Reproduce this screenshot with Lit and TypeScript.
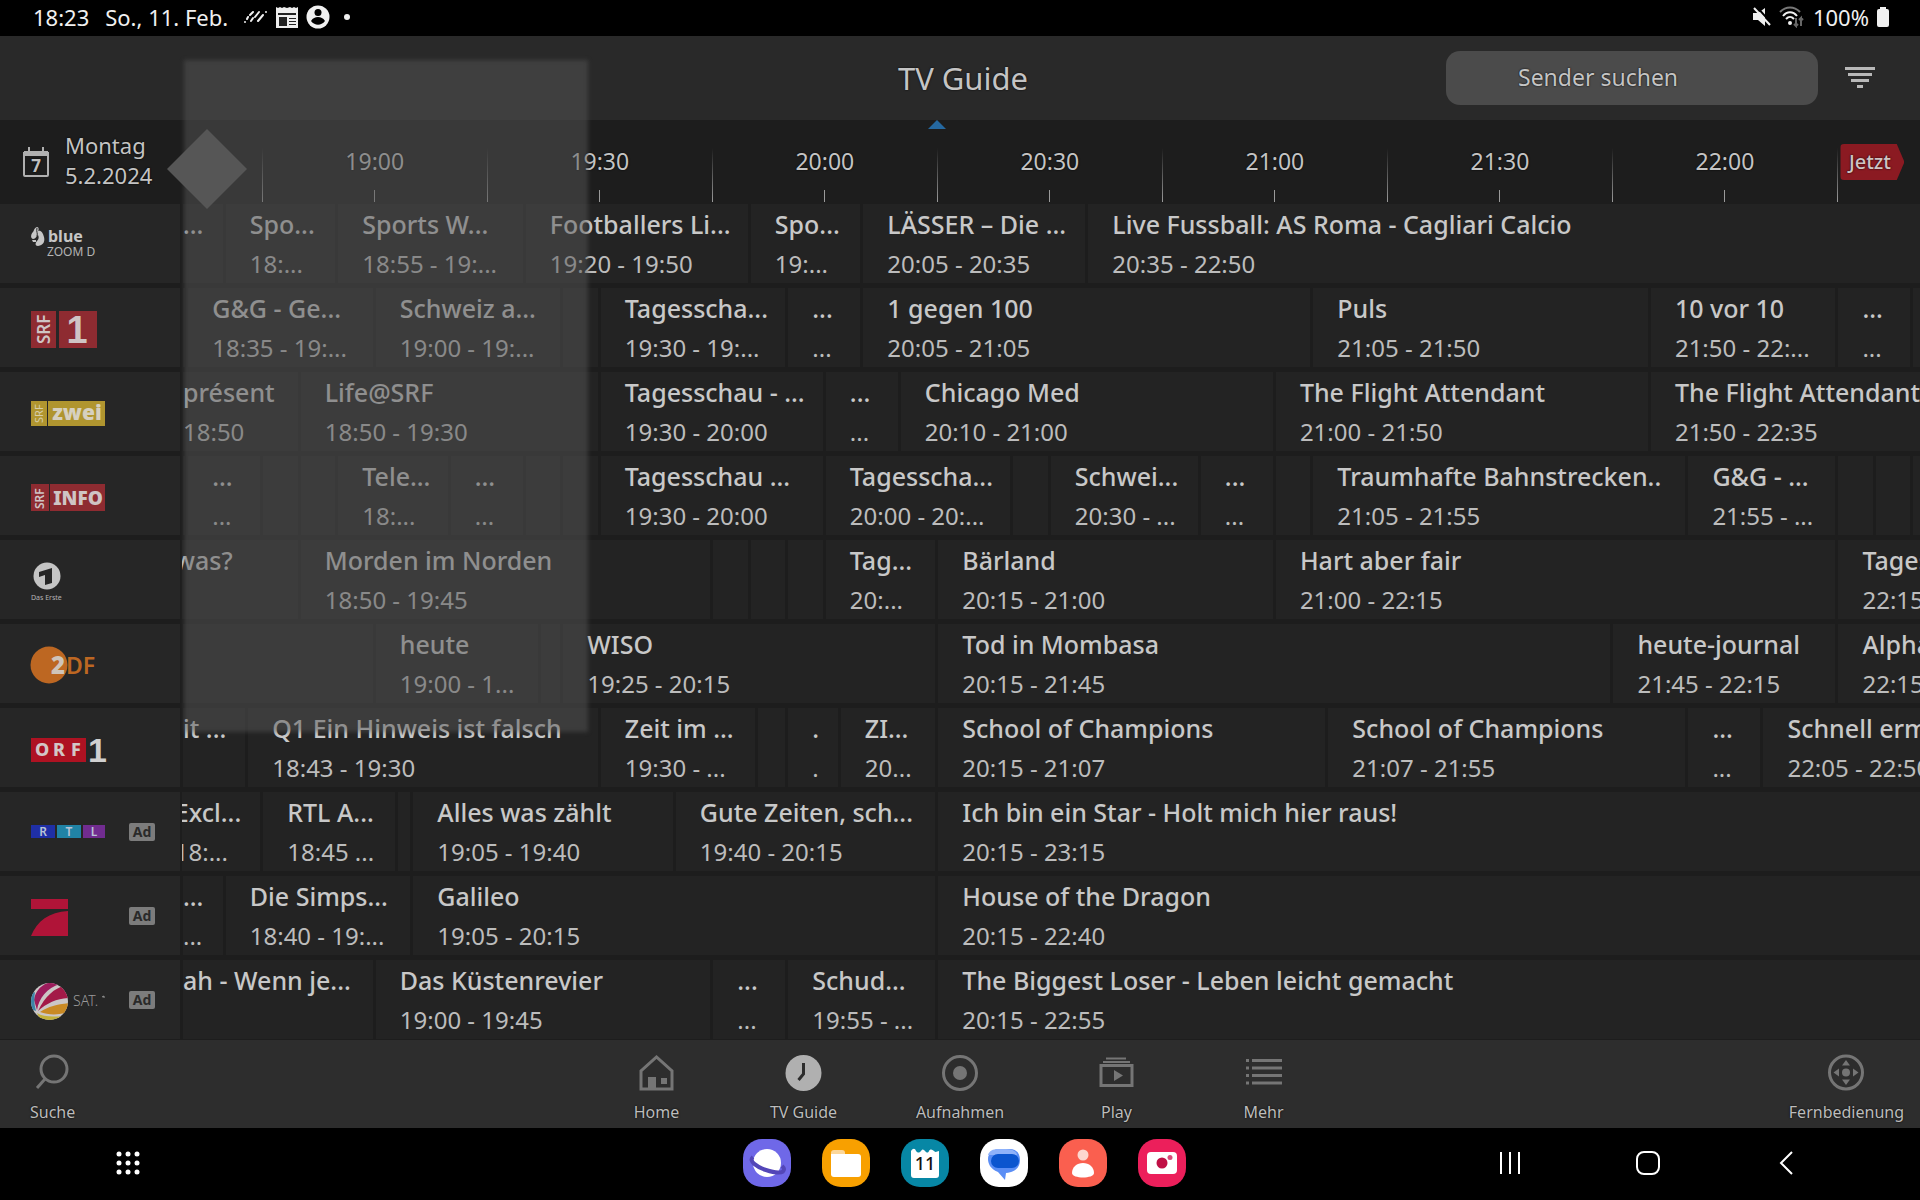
import { LitElement, html, svg, css, nothing } from "lit";
import type { SVGTemplateResult, TemplateResult } from "lit";
import { customElement, property } from "lit/decorators.js";

/** Minutes since midnight at the left edge of the timeline, and how many minutes it shows. */
const WINDOW_START = 18 * 60 + 34.3;
const WINDOW_SPAN = 231.7;

interface Show {
  end: number;
  title?: string;
  time?: string;
}

interface Channel {
  name: string;
  logo: SVGTemplateResult;
  ad?: boolean;
  start?: number;
  shows: Show[];
}

const at = (clock: string): number => {
  const [h, m] = clock.split(":").map(Number);
  return h * 60 + m;
};

const show = (end: string, title?: string, time?: string): Show => ({ end: at(end), title, time });

const blueLogo = svg`
  <path fill="#c6c6c6" d="M6 23c2 0 2 3 1 4 3-1 5 2 6 6s0 8-6 9c-3 0-3-3-1-5s2-4 1-6c-2 1-2 4-5 4-3-1-2-5 0-7 1-1 1-4 4-5z"/>
  <path fill="#c6c6c6" d="M1 36h4v2H2z"/>
  <path fill="none" stroke="#262626" stroke-width="1" d="M6 24c-1 4 1 5 0 8"/>
  <text x="17" y="38" font-size="16" font-weight="700" fill="#c6c6c6">blue</text>
  <text x="16" y="52" font-size="12" fill="#b4b4b4">ZOOM D</text>`;

const srf1Logo = svg`
  <rect x="0" y="23" width="25" height="37" fill="#8e2b31"/>
  <rect x="28" y="23" width="38" height="37" fill="#8e2b31"/>
  <text transform="translate(19 56) rotate(-90)" font-size="17" font-weight="600" fill="#cfc4c4">SRF</text>
  <text x="46" y="55" text-anchor="middle" font-family="Liberation Sans" font-size="38" font-weight="700" fill="#cfc4c4">1</text>`;

const srfZweiLogo = svg`
  <rect x="0" y="29" width="16" height="25" fill="#b0952f"/>
  <rect x="17" y="29" width="57" height="25" fill="#b0952f"/>
  <text transform="translate(12 51) rotate(-90)" font-size="11" fill="#d6cdaa">SRF</text>
  <text x="46" y="48" text-anchor="middle" font-size="21" font-weight="900" fill="#d6d0c0">zwei</text>`;

const srfInfoLogo = svg`
  <rect x="0" y="28" width="18" height="27" fill="#8e2b31"/>
  <rect x="19" y="28" width="55" height="27" fill="#8e2b31"/>
  <text transform="translate(13 53) rotate(-90)" font-size="12" font-weight="600" fill="#cfc4c4">SRF</text>
  <text x="47" y="49" text-anchor="middle" font-size="19" font-weight="900" fill="#cfc4c4">INFO</text>`;

const ersteLogo = svg`
  <circle cx="16" cy="36" r="13.500" fill="#c4c4c4"/>
  <path fill="#262626" d="M8 32l13-4v15l-7 2V35l-6 2z"/>
  <text x="0" y="60" font-size="7" fill="#b4b4b4">Das Erste</text>`;

const zdfLogo = svg`
  <circle cx="18" cy="41" r="18.500" fill="#bd6722"/>
  <text x="35" y="50" font-size="23" font-weight="600" fill="#bd6722">DF</text>
  <text x="20" y="50" font-size="24" font-weight="900" fill="#cfc4ba">2</text>`;

const orfLogo = svg`
  <rect x="0" y="30" width="55" height="24" fill="#ae1222"/>
  <text x="4 22 40" y="48" font-size="18" font-weight="800" fill="#d2c6c6">ORF</text>
  <text x="57" y="54" font-family="Liberation Sans" font-size="34" font-weight="700" fill="#d0d0d0">1</text>`;

const rtlLogo = svg`
  <rect x="0" y="33" width="24" height="13" fill="#1f2fa6"/>
  <rect x="26" y="33" width="24" height="13" fill="#2083a6"/>
  <rect x="52" y="33" width="22" height="13" fill="#712c90"/>
  <g font-size="12" font-weight="600" fill="#b9c3d6" text-anchor="middle">
    <text x="12" y="44">R</text><text x="38" y="44">T</text><text x="63" y="44">L</text>
  </g>`;

const pro7Logo = svg`
  <path fill="#b01438" d="M0 23h37v10H0zM37 35v25H0c6-15 18-24 37-25z"/>`;

const sat1Logo = svg`
  <defs><clipPath id="ball"><circle cx="18.500" cy="41.500" r="18.500"/></clipPath></defs>
  <g clip-path="url(#ball)">
    <rect x="0" y="23" width="37" height="37" fill="#cbc6c6"/>
    <path fill="#9c1c5c" d="M3 40C4 32 10 24 20 22l9 2C16 28 8 38 6 50z"/>
    <path fill="#a31a48" d="M7 51C14 36 24 28 33 26l6 12C27 38 16 43 7 51z"/>
    <path fill="#c98a24" d="M9 52c9-6 18-8 30-9l-5 10c-8 2-17 2-25-1z"/>
    <path fill="#c2b13a" d="M6 53c6 4 16 4 26 3l-10 6H10z"/>
    <path fill="#3c84a8" d="M0 34l4-2c-1 6-1 12 1 19l-5-2z"/>
  </g>
  <text x="42" y="46" font-size="14" font-weight="300" fill="#9a9a9a">SAT.</text>
  <path d="M71 37l2-1v2" stroke="#9a9a9a" fill="none"/>`;

const CHANNELS: Channel[] = [
  {
    name: "blue Zoom D",
    logo: blueLogo,
    shows: [
      show("18:40", "...", " "),
      show("18:55", "Spo...", "18:..."),
      show("19:20", "Sports W...", "18:55 - 19:..."),
      show("19:50", "Footballers Li...", "19:20 - 19:50"),
      show("20:05", "Spo...", "19:..."),
      show("20:35", "LÄSSER – Die ...", "20:05 - 20:35"),
      show("22:50", "Live Fussball: AS Roma - Cagliari Calcio", "20:35 - 22:50"),
    ],
  },
  {
    name: "SRF 1",
    logo: srf1Logo,
    shows: [
      show("18:35"),
      show("19:00", "G&G - Ge...", "18:35 - 19:..."),
      show("19:25", "Schweiz a...", "19:00 - 19:..."),
      show("19:30"),
      show("19:55", "Tagesscha...", "19:30 - 19:..."),
      show("20:05", "...", "..."),
      show("21:05", "1 gegen 100", "20:05 - 21:05"),
      show("21:50", "Puls", "21:05 - 21:50"),
      show("22:15", "10 vor 10", "21:50 - 22:..."),
      show("22:25", "...", "..."),
      show("23:00"),
    ],
  },
  {
    name: "SRF zwei",
    logo: srfZweiLogo,
    shows: [
      show("18:50", "présent", "18:50"),
      show("19:30", "Life@SRF", "18:50 - 19:30"),
      show("20:00", "Tagesschau - ...", "19:30 - 20:00"),
      show("20:10", "...", "..."),
      show("21:00", "Chicago Med", "20:10 - 21:00"),
      show("21:50", "The Flight Attendant", "21:00 - 21:50"),
      show("22:35", "The Flight Attendant", "21:50 - 22:35"),
    ],
  },
  {
    name: "SRF info",
    logo: srfInfoLogo,
    shows: [
      show("18:35"),
      show("18:45", "...", "..."),
      show("18:50"),
      show("18:55"),
      show("19:10", "Tele...", "18:..."),
      show("19:20", "...", "..."),
      show("19:25"),
      show("19:30"),
      show("20:00", "Tagesschau ...", "19:30 - 20:00"),
      show("20:25", "Tagesscha...", "20:00 - 20:..."),
      show("20:30"),
      show("20:50", "Schwei...", "20:30 - ..."),
      show("21:00", "...", "..."),
      show("21:05"),
      show("21:55", "Traumhafte Bahnstrecken..", "21:05 - 21:55"),
      show("22:15", "G&G - ...", "21:55 - ..."),
      show("22:20"),
      show("22:25"),
      show("23:00"),
    ],
  },
  {
    name: "Das Erste",
    logo: ersteLogo,
    start: at("18:30"),
    shows: [
      show("18:50", "was?", " "),
      show("19:45", "Morden im Norden", "18:50 - 19:45"),
      show("19:50"),
      show("19:55"),
      show("20:00"),
      show("20:15", "Tag...", "20:..."),
      show("21:00", "Bärland", "20:15 - 21:00"),
      show("22:15", "Hart aber fair", "21:00 - 22:15"),
      show("22:50", "Tagesthemen", "22:15 - 22:50"),
    ],
  },
  {
    name: "ZDF",
    logo: zdfLogo,
    shows: [
      show("19:00"),
      show("19:22", "heute", "19:00 - 1..."),
      show("19:25"),
      show("20:15", "WISO", "19:25 - 20:15"),
      show("21:45", "Tod in Mombasa", "20:15 - 21:45"),
      show("22:15", "heute-journal", "21:45 - 22:15"),
      show("23:45", "Alpha", "22:15 - 23:45"),
    ],
  },
  {
    name: "ORF 1",
    logo: orfLogo,
    shows: [
      show("18:43", "it ...", " "),
      show("19:30", "Q1 Ein Hinweis ist falsch", "18:43 - 19:30"),
      show("19:51", "Zeit im ...", "19:30 - ..."),
      show("19:55"),
      show("20:02", ".", "."),
      show("20:15", "ZI...", "20..."),
      show("21:07", "School of Champions", "20:15 - 21:07"),
      show("21:55", "School of Champions", "21:07 - 21:55"),
      show("22:05", "...", "..."),
      show("22:50", "Schnell ermittelt", "22:05 - 22:50"),
    ],
  },
  {
    name: "RTL",
    logo: rtlLogo,
    ad: true,
    start: at("18:30"),
    shows: [
      show("18:45", "Excl...", "18:..."),
      show("19:03", "RTL A...", "18:45 ..."),
      show("19:05"),
      show("19:40", "Alles was zählt", "19:05 - 19:40"),
      show("20:15", "Gute Zeiten, sch...", "19:40 - 20:15"),
      show("23:15", "Ich bin ein Star - Holt mich hier raus!", "20:15 - 23:15"),
    ],
  },
  {
    name: "ProSieben",
    logo: pro7Logo,
    ad: true,
    shows: [
      show("18:40", "...", "..."),
      show("19:05", "Die Simps...", "18:40 - 19:..."),
      show("20:15", "Galileo", "19:05 - 20:15"),
      show("22:40", "House of the Dragon", "20:15 - 22:40"),
    ],
  },
  {
    name: "SAT.1",
    logo: sat1Logo,
    ad: true,
    shows: [
      show("19:00", "ah - Wenn je...", " "),
      show("19:45", "Das Küstenrevier", "19:00 - 19:45"),
      show("19:55", "...", "..."),
      show("20:15", "Schud...", "19:55 - ..."),
      show("22:55", "The Biggest Loser - Leben leicht gemacht", "20:15 - 22:55"),
    ],
  },
];

const percent = (minutes: number): string => `${(minutes / WINDOW_SPAN) * 100}%`;

@customElement("channel-row")
class ChannelRow extends LitElement {
  @property({ attribute: false }) channel!: Channel;

  static styles = css`
    :host {
      display: grid;
      grid-template-columns: 180px minmax(0, 1fr);
      column-gap: 2px;
      height: 79px;
    }
    button {
      border: 0;
      margin: 0;
      padding: 0;
      font: inherit;
      color: inherit;
      text-align: left;
      cursor: pointer;
    }
    .station {
      display: flex;
      align-items: center;
      justify-content: space-between;
      padding: 0 25px 0 31px;
      background: #262626;
    }
    .logo {
      width: 76px;
      height: 79px;
      overflow: visible;
    }
    .ad {
      width: 26px;
      border-radius: 2px;
      background: #7c7c7c;
      color: #2a2a2a;
      font-size: 14px;
      font-weight: 700;
      line-height: 18px;
      text-align: center;
      text-shadow: none;
    }
    .shows {
      display: flex;
      overflow: hidden;
    }
    .show {
      box-sizing: border-box;
      flex: none;
      display: flex;
      flex-direction: column;
      justify-content: flex-start;
      border-left: 1px solid #1d1d1d;
      border-right: 2px solid #1d1d1d;
      background: #232323;
      white-space: pre;
      overflow: hidden;
    }
    .titled {
      padding-left: 24px;
    }
    .titled.cut {
      padding-left: 0;
    }
    .title {
      color: #c8c8c8;
      font-size: 25px;
      font-weight: 500;
      line-height: 40px;
    }
    .time {
      color: #bcbcbc;
      font-size: 24px;
      line-height: 39px;
    }
  `;

  render(): TemplateResult {
    const { name, logo, ad, shows, start } = this.channel;
    let from = start ?? WINDOW_START;
    return html`
      <button class="station" aria-label=${name}>
        <svg class="logo" viewBox="0 0 76 79" aria-hidden="true">${logo}</svg>
        ${ad ? html`<span class="ad">Ad</span>` : nothing}
      </button>
      <div class="shows">
        ${shows.map((s, i) => {
          const width = percent(s.end - from);
          const shift = i === 0 && start ? percent(start - WINDOW_START) : "0";
          const cut = i === 0 && !start;
          from = s.end;
          return html`<button
            class="show ${s.title ? "titled" : ""} ${cut ? "cut" : ""}"
            style="width:${width};margin-left:${shift}"
          >
            ${s.title
              ? html`<span class="title">${s.title}</span><span class="time">${s.time}</span>`
              : nothing}
          </button>`;
        })}
      </div>
    `;
  }
}

interface Tab {
  label: string;
  icon: SVGTemplateResult;
  active?: boolean;
}

const searchIcon = svg`<circle cx="19" cy="14" r="13"/><path d="M10 24L2 33"/>`;
const remoteIcon = svg`<circle cx="18" cy="17.500" r="16.500"/>
  <g fill="currentColor" stroke="none"><circle cx="18" cy="17.500" r="4"/>
  <path d="M18 5l4 5.500h-8zM18 30l4-5.500h-8zM5.500 17.500l5.500-4v8zM30.500 17.500l-5.500-4v8z"/></g>`;

const TABS: Tab[] = [
  {
    label: "Home",
    icon: svg`<path d="M2 34V16L17.500 2 33 16v18z"/>
      <path fill="currentColor" stroke="none" d="M9 22h8v12H9zM22 23h6v6h-6z"/>`,
  },
  {
    label: "TV Guide",
    active: true,
    icon: svg`<circle cx="17.500" cy="18" r="18" fill="currentColor" stroke="none"/>
      <path d="M17.500 8v11l-5 6" stroke="#2d2d2d"/>`,
  },
  {
    label: "Aufnahmen",
    icon: svg`<circle cx="18" cy="18" r="16.500"/><circle cx="18" cy="18" r="7" fill="currentColor" stroke="none"/>`,
  },
  {
    label: "Play",
    icon: svg`<path d="M2 10.500h31v20H2z"/><path stroke-width="2" d="M4 7h27M7 3.500h20"/>
      <path fill="currentColor" stroke="none" d="M15 15l9 5.500-9 5.500z"/>`,
  },
  {
    label: "Mehr",
    icon: svg`<path d="M0 5.500h3M6 5.500h30M0 13h3M6 13h30M0 20.500h3M6 20.500h30M0 28h3M6 28h30"/>`,
  },
];

const APPS: { label: string; icon: SVGTemplateResult }[] = [
  {
    label: "Internet",
    icon: svg`<rect width="48" height="48" rx="19" fill="#6f68e8"/><circle cx="24" cy="24" r="14" fill="#fff"/>
      <path d="M10 18c-5 4 4 10 13 13 9 3 18 4 18-1 0-1-1-2-2-3" fill="none" stroke="#5346b8" stroke-width="4"/>`,
  },
  {
    label: "Eigene Dateien",
    icon: svg`<rect width="48" height="48" rx="19" fill="#f8a000"/><path d="M9 14a3 3 0 013-3h8a3 3 0 013 3v4H9z" fill="#fcd79a"/>
      <path d="M9 15h27a3 3 0 013 3v17a3 3 0 01-3 3H12a3 3 0 01-3-3z" fill="#fff"/>`,
  },
  {
    label: "Kalender",
    icon: svg`<rect width="48" height="48" rx="19" fill="#0787a5"/>
      <path d="M10 12c2-3 4-3 5 0 2 2 3 2 5 0 1-2 2-2 4 0s3 2 4 0 3-2 5 0 3 0 5 0v24a3 3 0 01-3 3H13a3 3 0 01-3-3z" fill="#fff"/>
      <text x="24" y="31" text-anchor="middle" font-size="18" font-weight="500" fill="#111">11</text>`,
  },
  {
    label: "Messages",
    icon: svg`<rect width="48" height="48" rx="19" fill="#fff"/>
      <path d="M20 10h10c6 0 10 4 10 11s-4 12-14 13l-1 7-7-8C10 30 8 24 8 20c0-6 5-10 12-10z" fill="#5b8ef5"/>
      <path d="M18 10h8c7 0 11 3 11 6H8c1-4 5-6 10-6z" fill="#8fb2fa"/>
      <rect x="11" y="15" width="28" height="14" rx="7" fill="#0b55cf"/>`,
  },
  {
    label: "Kontakte",
    icon: svg`<rect width="48" height="48" rx="19" fill="#fa5f4f"/><circle cx="24" cy="16" r="5.500" fill="#fdd7d0"/>
      <path d="M13 34c0-6 5-10 11-10s11 4 11 10-22 6-22 0z" fill="#fff"/>`,
  },
  {
    label: "Kamera",
    icon: svg`<rect width="48" height="48" rx="19" fill="#ec1f5b"/><rect x="9" y="13" width="30" height="22" rx="4" fill="#fff"/>
      <circle cx="24" cy="24" r="5.500" fill="#c01045"/><circle cx="32" cy="18.500" r="2.500" fill="#d84b78"/>`,
  },
];

const HALF_HOURS = ["19:00", "19:30", "20:00", "20:30", "21:00", "21:30", "22:00"];

@customElement("app-root")
class AppRoot extends LitElement {
  static styles = css`
    :host {
      display: flex;
      flex-direction: column;
      position: relative;
      min-height: 100vh;
      overflow: hidden;
      background: #1d1d1d;
      color: #c4c4c4;
      font-family: "Noto Sans", "Open Sans", sans-serif;
      text-shadow: 0 0 2px #000;
    }
    button,
    input {
      border: 0;
      margin: 0;
      padding: 0;
      background: none;
      font: inherit;
      color: inherit;
      text-shadow: inherit;
    }
    button {
      cursor: pointer;
    }
    svg {
      display: block;
      flex: none;
    }
    .status {
      display: flex;
      align-items: center;
      justify-content: space-between;
      height: 36px;
      padding: 0 31px 0 33px;
      background: #000;
      color: #f0f0f0;
      font-size: 22px;
      line-height: 34px;
    }
    .cluster {
      display: flex;
      align-items: center;
      gap: 8px;
      height: 34px;
      align-self: flex-start;
    }
    .date {
      padding: 0 8px;
    }
    .header {
      display: grid;
      grid-template-columns: 1fr auto 1fr;
      align-items: center;
      height: 84px;
      background: #292929;
    }
    .heading {
      grid-column: 2;
      margin: 0;
      padding-left: 6px;
      font-size: 31px;
      font-weight: 400;
      line-height: 40px;
    }
    .tools {
      display: flex;
      align-items: center;
      justify-content: flex-end;
      gap: 27px;
      padding-right: 45px;
    }
    .search {
      box-sizing: border-box;
      width: 372px;
      height: 54px;
      padding: 0 24px 2px 72px;
      border-radius: 14px;
      background: #4b4b4b;
      font-size: 23px;
    }
    .search::placeholder {
      color: #c4c4c4;
      opacity: 1;
    }
    .timebar {
      display: grid;
      grid-template-columns: 180px minmax(0, 1fr);
      column-gap: 2px;
      height: 84px;
    }
    .day {
      display: flex;
      align-items: center;
      gap: 16px;
      padding-left: 23px;
      font-size: 22px;
      line-height: 30px;
      text-align: left;
    }
    .daytext {
      padding-bottom: 4px;
    }
    .scale {
      display: flex;
      overflow: hidden;
      font-size: 23px;
      line-height: 32px;
    }
    .slot {
      box-sizing: border-box;
      flex: none;
      position: relative;
      display: flex;
      flex-direction: column;
      justify-content: space-between;
      align-items: center;
      padding: 25px 0 2px;
      background: linear-gradient(transparent, #9a9a9a) 0 28px / 1px 54px no-repeat;
    }
    .slot::after {
      content: "";
      width: 1px;
      height: 12px;
      background: #9a9a9a;
    }
    .slot.prime::before {
      content: "";
      position: absolute;
      left: -9px;
      top: 0;
      border: 9px solid transparent;
      border-top: 0;
      border-bottom-color: #2568a0;
    }
    .last {
      align-items: flex-start;
      padding-left: 3px;
      padding-top: 24px;
    }
    .last::after {
      visibility: hidden;
    }
    .now {
      box-sizing: border-box;
      width: 64px;
      height: 36px;
      padding-right: 5px;
      border-radius: 4px;
      background: #8b1a22;
      clip-path: polygon(0 0, 88% 0, 100% 50%, 88% 100%, 0 100%);
      color: #d0c4c4;
      font-size: 20px;
      font-weight: 500;
      line-height: 36px;
      text-align: center;
    }
    .guide {
      flex: 1;
      display: flex;
      flex-direction: column;
      gap: 5px;
    }
    .tabs {
      display: grid;
      grid-template-columns: 1fr auto 1fr;
      height: 88px;
      border-top: 1px solid #1d1d1d;
      background: #2d2d2d;
    }
    .group {
      display: flex;
    }
    .tab {
      display: flex;
      flex-direction: column;
      align-items: center;
      gap: 10px;
      width: 147px;
      padding-top: 15px;
      color: #bcbcbc;
      font-size: 16px;
      line-height: 22px;
    }
    .tab.wide {
      width: 166px;
    }
    .tab.side {
      width: auto;
      justify-self: end;
      padding-right: 16px;
    }
    .tab.first {
      justify-self: start;
      padding-right: 0;
      padding-left: 30px;
    }
    .glyph {
      width: 36px;
      height: 36px;
      fill: none;
      stroke: currentColor;
      stroke-width: 3;
      color: #757575;
      overflow: visible;
    }
    .glyph.active {
      color: #b0b0b0;
    }
    .system {
      box-sizing: border-box;
      display: grid;
      grid-template-columns: 1fr auto 1fr;
      align-items: center;
      height: 72px;
      padding: 0 65px 2px 73px;
      background: #000;
      text-shadow: none;
    }
    .apps {
      display: flex;
      gap: 31px;
    }
    .launcher {
      justify-self: start;
      display: grid;
      place-items: center;
      width: 110px;
      height: 48px;
    }
    .keys {
      display: flex;
      justify-content: flex-end;
    }
    .key {
      display: grid;
      place-items: center;
      width: 138px;
      height: 48px;
      fill: none;
      stroke: #fff;
      stroke-width: 2;
    }
    .veil {
      position: absolute;
      left: 184px;
      top: 60px;
      width: 404px;
      height: 672px;
      background: rgba(86, 86, 86, 0.5);
      filter: blur(2px);
      pointer-events: none;
    }
    .diamond {
      position: absolute;
      left: 167px;
      top: 129px;
      width: 80px;
      height: 80px;
      background: #565656;
      clip-path: polygon(50% 0, 100% 50%, 50% 100%, 0 50%);
      pointer-events: none;
    }
  `;

  private tab(tab: Tab, extra = ""): TemplateResult {
    return html`<button class="tab ${extra}">
      <svg class="glyph ${tab.active ? "active" : ""}" viewBox="0 0 36 36" aria-hidden="true">${tab.icon}</svg>
      <span>${tab.label}</span>
    </button>`;
  }

  render(): TemplateResult {
    const slotWidth = percent(30);
    const lead = percent(at("18:45") - WINDOW_START);
    return html`
      <div class="status">
        <div class="cluster">
          <span>18:23</span>
          <span class="date">So., 11. Feb.</span>
          <svg width="24" height="22" viewBox="0 0 24 22" stroke="#f0f0f0" stroke-width="2" stroke-linecap="round" aria-hidden="true">
            <path d="M1 16v0M6 9l3-3M7 15l2-3M11 11l4-5M14 15l5-6M22 6v0M3 13l1-2" fill="none" />
          </svg>
          <svg width="22" height="22" viewBox="0 0 22 22" aria-hidden="true">
            <path d="M0 3V1l2 1 2-1 2 1 2-1 3 1 3-1 2 1 2-1 2 1 2-1v21H0z" fill="#eee" />
            <path d="M2 7h18v2H2zM3 11h8v9H3zM13 12h7v1h-7zM13 15h7v1h-7zM13 18h7v1h-7z" fill="#222" />
          </svg>
          <svg width="24" height="24" viewBox="0 0 24 24" aria-hidden="true">
            <circle cx="12" cy="12" r="11.500" fill="#f0f0f0" />
            <circle cx="12" cy="7.500" r="3.500" /><path d="M5 16c2-3 4-4 7-4s5 1 7 4c-4 5-10 5-14 0z" />
          </svg>
          <svg width="22" height="22" viewBox="0 0 22 22" aria-hidden="true"><circle cx="9" cy="11" r="3" fill="#f0f0f0" /></svg>
        </div>
        <div class="cluster">
          <svg width="18" height="20" viewBox="0 0 18 20" aria-hidden="true">
            <path d="M0 6h5l7-5v18l-7-6H0z" fill="#f0f0f0" />
            <path d="M3 -1l18 20" stroke="#000" stroke-width="2" /><path d="M1 1l16 17" stroke="#f0f0f0" stroke-width="2" />
          </svg>
          <svg width="26" height="22" viewBox="0 0 26 22" fill="none" stroke-width="2" aria-hidden="true">
            <path d="M1 6c6-6 14-6 20 0" stroke="#777" />
            <path d="M4 10c4-5 10-5 14 0M7 13c3-3 5-3 8 0" stroke="#f0f0f0" />
            <circle cx="11" cy="17" r="1" stroke="#f0f0f0" />
            <path d="M17 12v8l-2-2M17 20l2-2M22 20v-8l-2 2M22 12l2 2" stroke="#666" />
          </svg>
          <span>100%</span>
          <svg width="12" height="20" viewBox="0 0 12 20" aria-hidden="true">
            <path d="M3 0h6v2h1a2 2 0 012 2v14a2 2 0 01-2 2H2a2 2 0 01-2-2V4a2 2 0 012-2h1z" fill="#f0f0f0" />
          </svg>
        </div>
      </div>

      <header class="header">
        <h1 class="heading">TV Guide</h1>
        <div class="tools">
          <input class="search" type="search" placeholder="Sender suchen" aria-label="Sender suchen" />
          <button aria-label="Filter">
            <svg width="30" height="22" viewBox="0 0 30 22" fill="#b8b8b8">
              <path d="M0 0h30v3H0zM3 6h24v3H3zM6 12h18v3H6zM12 18h6v3h-6z" />
            </svg>
          </button>
        </div>
      </header>

      <div class="timebar">
        <button class="day">
          <svg width="26" height="30" viewBox="0 0 26 30" aria-hidden="true">
            <path d="M1 6h24v22a1 1 0 01-1 1H2a1 1 0 01-1-1z" fill="none" stroke="#b0b0b0" stroke-width="2" />
            <path d="M1 4h24v5H1zM5 0h2v6H5zM19 0h2v6h-2z" fill="#b0b0b0" />
            <text x="13" y="25" text-anchor="middle" font-size="17" font-weight="700" fill="#c0c0c0">7</text>
          </svg>
          <span class="daytext">Montag<br />5.2.2024</span>
        </button>
        <div class="scale">
          ${HALF_HOURS.map(
            (label, i) => html`<div
              class="slot ${label === "20:30" ? "prime" : ""}"
              style="width:${slotWidth};margin-left:${i === 0 ? lead : "0"}"
            >
              ${label}
            </div>`,
          )}
          <div class="slot last" style="width:${slotWidth}"><button class="now">Jetzt</button></div>
        </div>
      </div>

      <main class="guide">
        ${CHANNELS.map((channel) => html`<channel-row .channel=${channel}></channel-row>`)}
      </main>

      <nav class="tabs">
        ${this.tab({ label: "Suche", icon: searchIcon }, "side first")}
        <div class="group">${TABS.map((t) => this.tab(t, t.label === "Aufnahmen" ? "wide" : ""))}</div>
        ${this.tab({ label: "Fernbedienung", icon: remoteIcon }, "side")}
      </nav>

      <div class="system">
        <button class="launcher" aria-label="Apps">
          <svg width="24" height="24" viewBox="0 0 24 24" fill="#fff">
            ${[3, 12, 21].map((y) => [3, 12, 21].map((x) => svg`<circle cx=${x} cy=${y} r="2.500"/>`))}
          </svg>
        </button>
        <div class="apps">
          ${APPS.map(
            (app) => html`<button aria-label=${app.label}>
              <svg width="48" height="48" viewBox="0 0 48 48">${app.icon}</svg>
            </button>`,
          )}
        </div>
        <div class="keys">
          <button class="key" aria-label="Letzte Apps">
            <svg width="24" height="24" viewBox="0 0 24 24"><path d="M3 1v22M12 1v22M21 1v22" /></svg>
          </button>
          <button class="key" aria-label="Startseite">
            <svg width="24" height="24" viewBox="0 0 24 24"><rect x="1" y="1" width="22" height="22" rx="7" /></svg>
          </button>
          <button class="key" aria-label="Zurück">
            <svg width="24" height="24" viewBox="0 0 24 24"><path d="M18 1L7 12l11 11" /></svg>
          </button>
        </div>
      </div>

      <div class="veil"></div>
      <div class="diamond"></div>
    `;
  }
}
